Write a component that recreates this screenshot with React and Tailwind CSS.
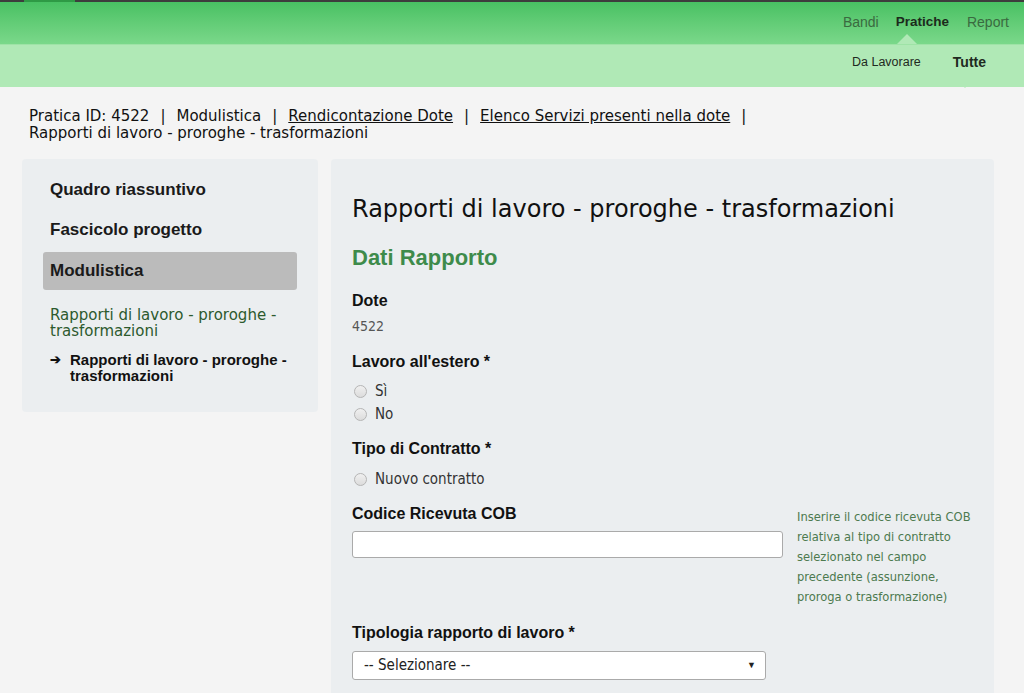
import React from "react";

const sans = "font-['Liberation_Sans',Arial,sans-serif]";
const wide = "font-['DejaVu_Sans',Verdana,sans-serif]";
const narrow = "font-['DejaVu_Sans_Condensed','DejaVu_Sans',sans-serif]";

function Radio({ label }) {
    return (
        <label className="flex items-center gap-[8px] h-[23px] pl-[2px] text-[#333]">
            <span className="w-[13px] h-[13px] rounded-full border border-[#b5b5b5] bg-gradient-to-b from-[#f0f0f0] to-[#dcdcdc]" />
            <span className={narrow + " text-[15px]"}>{label}</span>
        </label>
    );
}

function Sep() {
    return <span className="mx-[11px]">|</span>;
}

export default function App() {
    return (
        <div className={sans + " min-h-[693px] bg-[#f4f4f4] text-[#111]"}>
            {/* top bar */}
            <div className="h-[2px] bg-[#3d3d3d] flex">
                <div className="ml-[24px] w-[51px] bg-[#2e9a45]" />
            </div>
            <div className="h-[42px] bg-gradient-to-b from-[#48c163] to-[#7ad88a] flex items-center justify-end pr-[15px] pb-[2px] text-[14px]">
                <span className="text-[#3a6a40]">Bandi</span>
                <span className="relative ml-[17px] font-bold text-[13.5px] text-[#1c2a1c]">
                    Pratiche
                    <span className="absolute left-[11px] -translate-x-1/2 top-[22px] w-0 h-0 border-x-[10px] border-x-transparent border-b-[10px] border-b-[#b0e9b6]" />
                </span>
                <span className="ml-[18px] text-[#3a6a40]">Report</span>
            </div>
            <div className="h-px bg-[#9ee3a6]" />
            <div className="h-[42px] bg-[#b0e9b6] flex items-center justify-end pr-[38px] pb-[7px] text-[12.5px]">
                <span className="text-[#1f2a1f]">Da Lavorare</span>
                <span className="relative ml-[32px] font-bold text-[14px] text-[#1f2a1f]">
                    Tutte
                    <span className="absolute left-[12px] -translate-x-1/2 top-[26px] w-0 h-0 border-x-[10px] border-x-transparent border-t-[10px] border-t-[#b0e9b6]" />
                </span>
            </div>

            {/* breadcrumb */}
            <div className={wide + " px-[29px] pt-[21px] text-[15px] leading-[17px] text-[#111]"}>
                <div>
                    Pratica ID: 4522<Sep />Modulistica<Sep />
                    <span className="underline">Rendicontazione Dote</span><Sep />
                    <span className="underline">Elenco Servizi presenti nella dote</span><Sep />
                </div>
                <div>Rapporti di lavoro - proroghe - trasformazioni</div>
            </div>

            <div className="flex gap-[13px] px-[22px] pt-[17px] items-start">
                {/* sidebar */}
                <div className="w-[296px] shrink-0 bg-[#ebeef0] rounded-[4px] pl-[21px] pr-[14px] pt-[21px] pb-[28px]">
                    <div className="px-[7px] text-[17px] font-bold leading-[20px] text-[#1a1a1a]">Quadro riassuntivo</div>
                    <div className="px-[7px] mt-[20px] text-[17px] font-bold leading-[20px] text-[#1a1a1a]">Fascicolo progetto</div>
                    <div className="mt-[12px] mr-[7px] h-[38px] flex items-center px-[7px] bg-[#bbbbbb] rounded-[3px] text-[17px] font-bold text-[#1a1a1a]">Modulistica</div>
                    <div className={wide + " px-[7px] mt-[17px] text-[15px] leading-[16px] text-[#2d5a2e]"}>
                        Rapporti di lavoro - proroghe - trasformazioni
                    </div>
                    <div className="flex mt-[13px] px-[7px] text-[15px] font-bold leading-[16px] text-[#111]">
                        <span className="w-[20px] shrink-0 text-[13px]">➔</span>
                        <span>Rapporti di lavoro - proroghe - trasformazioni</span>
                    </div>
                </div>

                {/* main */}
                <div className="w-[663px] shrink-0 bg-[#ebeef0] rounded-[4px] px-[21px] pt-[34px] pb-[20px] min-h-[540px]">
                    <h1 className={wide + " text-[24px] leading-[32px] text-[#111]"}>Rapporti di lavoro - proroghe - trasformazioni</h1>
                    <h2 className="mt-[20px] text-[22px] leading-[26px] font-bold text-[#3e8b4b]">Dati Rapporto</h2>

                    <div className="mt-[19px] text-[16px] font-bold leading-[22px]">Dote</div>
                    <div className={narrow + " mt-[5px] text-[14px] leading-[18px] text-[#555]"}>4522</div>

                    <div className="mt-[16px] text-[16px] font-bold leading-[22px]">Lavoro all'estero *</div>
                    <div className="mt-[7px]">
                        <Radio label="Sì" />
                        <Radio label="No" />
                    </div>

                    <div className="mt-[12px] text-[16px] font-bold leading-[22px]">Tipo di Contratto *</div>
                    <div className="mt-[8px]">
                        <Radio label="Nuovo contratto" />
                    </div>

                    <div className="flex gap-[14px] mt-[12px]">
                        <div className="w-[431px] shrink-0">
                            <div className="text-[16px] font-bold leading-[22px]">Codice Ricevuta COB</div>
                            <input className="mt-[6px] w-full h-[27px] bg-white border border-[#aaa] rounded-[3px]" />
                        </div>
                        <div className={narrow + " mt-[4px] w-[175px] whitespace-nowrap text-[12.8px] leading-[20px] text-[#4d7a4f]"}>
                            Inserire il codice ricevuta COB<br />
                            relativa al tipo di contratto<br />
                            selezionato nel campo<br />
                            precedente (assunzione,<br />
                            proroga o trasformazione)
                        </div>
                    </div>

                    <div className="mt-[15px] text-[16px] font-bold leading-[22px]">Tipologia rapporto di lavoro *</div>
                    <div className="mt-[7px] w-[414px] h-[29px] bg-white border border-[#aaa] rounded-[3px] flex items-center justify-between pl-[11px] pr-[9px]">
                        <span className={narrow + " text-[15px] text-[#222]"}>-- Selezionare --</span>
                        <span className="text-[9px] text-[#222]">▼</span>
                    </div>
                </div>
            </div>
        </div>
    );
}
